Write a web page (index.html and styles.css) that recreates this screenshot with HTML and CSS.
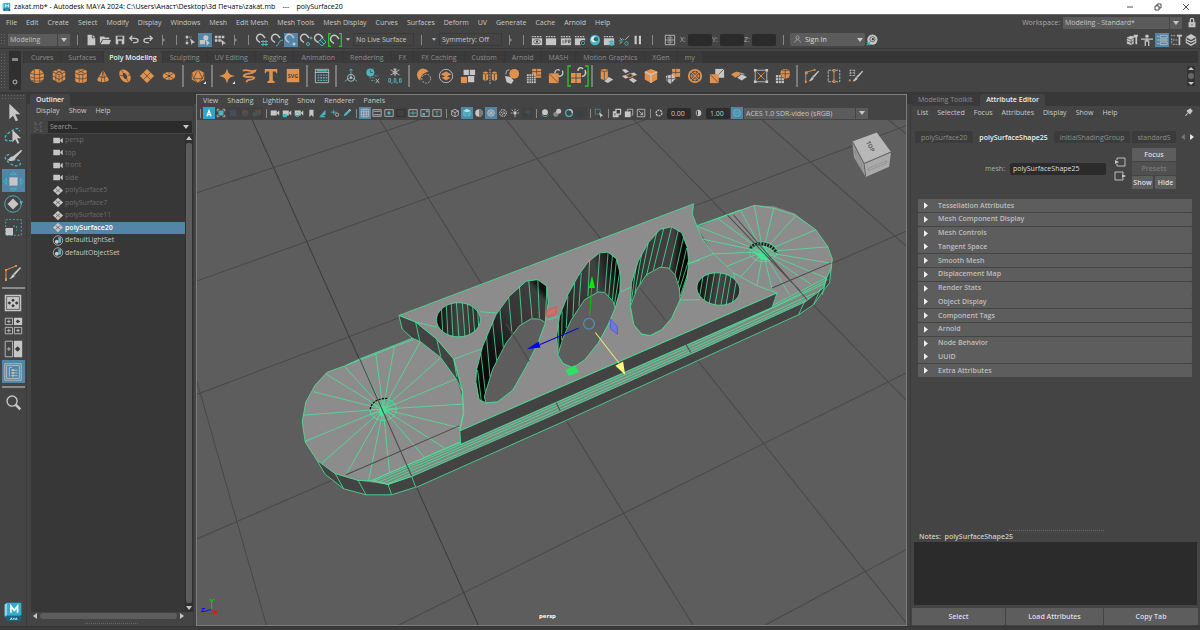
FILE: index.html
```html
<!DOCTYPE html>
<html lang="en">
<head>
<meta charset="utf-8">
<title>zakat.mb* - Autodesk MAYA 2024</title>
<link rel="stylesheet" href="styles.css">
</head>
<body>
<svg class="defs" aria-hidden="true">
  <defs>
    <symbol id="magnet" viewBox="0 0 14 14"><path class="sw2" d="M5 9.500 2.500 7.500A3.600 3.600 0 1 1 8 2.500l2 2.500"/></symbol>
    <symbol id="clap" viewBox="0 0 14 14"><path class="w" d="M1 5h12v8H1z"/><path class="sw2" d="M1 3h12" stroke-dasharray="2 1"/></symbol>
    <symbol id="camera" viewBox="0 0 14 14"><path class="w" d="M1 3.500h8.500v7H1zM10 6l3-2.500v7L10 8z"/></symbol>
    <symbol id="mesh" viewBox="0 0 14 14"><path class="w" d="M7 1l6.500 6L7 13 .5 7z"/><path class="sd" d="M4 4.500l6 5M10 4.500l-6 5"/></symbol>
    <symbol id="set" viewBox="0 0 14 14"><circle class="sw" cx="7" cy="7" r="6"/><path class="t" d="M7 3h4v7H8z"/><circle class="w" cx="5.500" cy="8.500" r="2.500"/></symbol>
    <symbol id="cursor" viewBox="0 0 24 24"><path class="w" d="M8 3v17l4-4 3 6 2.500-1-3-6.500H20z"/></symbol>
    <symbol id="down" viewBox="0 0 6 4"><path class="w" d="M0 0h6L3 4z"/></symbol>
    <symbol id="right" viewBox="0 0 5 8"><path fill="#eee" d="M0 0l5 4-5 4z"/></symbol>
    <symbol id="app" viewBox="0 0 24 24"><path fill="#1f7fa0" d="M2 3l3-2h16v18H2z"/><path fill="#38abd0" d="M5 1h17v15H5z"/><path fill="#8ed4e8" d="M2 3l3-2v15l-3 1z"/><path fill="#1b607c" d="M4 17h18v6H4z"/><path fill="none" stroke="#fff" stroke-width="2" d="M9.500 13V5l4 5 4-5v8"/><path fill="none" stroke="#cfe6ee" stroke-width="1.200" d="M9 21.500l1-2.500 1 2.500M12 19l1 1.200 1-1.200M13 20v1.500M15 21.500l1-2.500 1 2.500"/></symbol>
    <symbol id="brush" viewBox="0 0 18 18"><path class="w" d="M16 3l1 1-6 7-2-1zM9 10l2 2c-2 2-4 3-6 3 2-1 2-3 4-5z"/></symbol>
  </defs>
</svg>

<header class="titlebar">
  <svg class="logo"><use href="#app"/></svg>
  <h1>zakat.mb* - Autodesk MAYA 2024: C:\Users\Анаст\Desktop\3d Печать\zakat.mb&nbsp;&nbsp;&nbsp; ---&nbsp;&nbsp;&nbsp; polySurface20</h1>
  <div class="winbtns">
    <button aria-label="Minimize"><svg viewBox="0 0 8 8"><path d="M1 4h6"/></svg></button>
    <button aria-label="Restore"><svg viewBox="0 0 8 8"><path d="M1 3h4v4H1zM3 3V1h4v4H5"/></svg></button>
    <button aria-label="Close"><svg viewBox="0 0 8 8"><path d="M1 1l6 6M7 1L1 7"/></svg></button>
  </div>
</header>

<nav class="menubar">
  <div class="menus"><button>File</button><button>Edit</button><button>Create</button><button>Select</button><button>Modify</button><button>Display</button><button>Windows</button><button>Mesh</button><button>Edit Mesh</button><button>Mesh Tools</button><button>Mesh Display</button><button>Curves</button><button>Surfaces</button><button>Deform</button><button>UV</button><button>Generate</button><button>Cache</button><button>Arnold</button><button>Help</button></div>
  <div class="workspace">
    <label for="ws">Workspace:</label>
    <span class="combo wide"><select id="ws"><option>Modeling - Standard*</option></select><svg><use href="#down"/></svg></span>
    <button class="ib" aria-label="Lock workspace"><svg viewBox="0 0 14 14"><path class="w" d="M3 6h8v6H3z"/><path class="sw2" d="M5 6V3.500a2 2 0 0 1 4 0V6"/><path class="sd" d="M7 8v2"/></svg></button>
  </div>
</nav>

<div class="status">
  <i class="grip"></i>
  <span class="combo mode"><select aria-label="Menu set"><option>Modeling</option></select><svg><use href="#down"/></svg></span>
  <i class="sep"></i>
  <div class="grp g5">
    <button class="ib" aria-label="New scene"><svg viewBox="0 0 14 14"><path class="w" d="M3 1h5v4h4v8H3zM9 1l3 3H9z"/></svg></button>
    <button class="ib" aria-label="Open scene"><svg viewBox="0 0 14 14"><path class="w" d="M1 3h5l1 1h5v2H4l-3 5zM4.500 7H14l-2 5H2z"/></svg></button>
    <button class="ib" aria-label="Save scene"><svg viewBox="0 0 14 14"><path class="w" fill-rule="evenodd" d="M2 2h10v10H2zM4 3v3h6V3zM5 8v4h4V8z"/></svg></button>
    <button class="ib" aria-label="Undo"><svg viewBox="0 0 14 14"><path class="sw2" d="M5 2L2 5l3 3M2 5h6c5 0 5 5 0 5H6"/></svg></button>
    <button class="ib" aria-label="Redo"><svg viewBox="0 0 14 14"><path class="sw2" d="M9 2l3 3-3 3M12 5H6c-5 0-5 5 0 5h2"/></svg></button>
  </div>
  <i class="sep fold"></i><i class="sep"></i>
  <div class="grp g3">
    <button class="ib" aria-label="Select by hierarchy"><svg viewBox="0 0 14 14"><path class="w" d="M2 2h3v3H2zM2 9h3v3H2zM7 5l6 5-3 .5L9 13z"/><path class="sw" d="M6 3.500h3M3.500 5v4" stroke-dasharray="1 1"/></svg></button>
    <button class="ib on" aria-label="Select by object"><svg viewBox="0 0 14 14"><circle class="w" cx="8" cy="4.500" r="3"/><path class="w" d="M1 7h6v5H1zM8 6l5 5-2 .5L9 14z"/></svg></button>
    <button class="ib" aria-label="Select by component"><svg viewBox="0 0 14 14"><path class="w" d="M1 2h3v3H1zM5 2h3v3H5zM9 2h3v3H9zM1 6h3v3H1zM5 6h3v3H5zM8 6l6 5-3 .5L10 14z"/></svg></button>
  </div>
  <i class="sep fold"></i><i class="sep"></i>
  <div class="grp g6">
    <button class="ib" aria-label="Snap to grids"><svg viewBox="0 0 14 14"><use href="#magnet"/><path class="st" d="M8 7v6M11 7v6M6 8.500h7M6 11.500h7"/></svg></button>
    <button class="ib" aria-label="Snap to curves"><svg viewBox="0 0 14 14"><use href="#magnet"/><path class="st" d="M6 13c4-1 1-5 7-6"/></svg></button>
    <button class="ib on" aria-label="Snap to points"><svg viewBox="0 0 14 14"><use href="#magnet"/><circle class="w" cx="10" cy="11" r="1.500"/></svg></button>
    <button class="ib" aria-label="Snap to projected center"><svg viewBox="0 0 14 14"><use href="#magnet"/><circle class="st" cx="12" cy="5" r="1"/><circle class="st" cx="9" cy="11" r="1.500"/></svg></button>
    <button class="ib" aria-label="Snap to view planes"><svg viewBox="0 0 14 14"><use href="#magnet"/><path class="st" d="M9 5l4 4-4 4-4-4zM7 7l4 4"/></svg></button>
    <button class="ib" aria-label="Make live"><svg viewBox="0 0 14 14"><use href="#magnet" x="1" y="1"/><path class="sg" d="M3 .7H.7v12.600H3M11 .7h2.300v12.600H11"/></svg></button>
  </div>
  <button class="caret" aria-label="Live surface menu"><svg><use href="#down"/></svg></button>
  <button class="field live">No Live Surface</button>
  <i class="sep"></i>
  <button class="caret" aria-label="Symmetry menu"><svg><use href="#down"/></svg></button>
  <button class="field sym">Symmetry: Off</button>
  <i class="sep fold"></i><i class="sep"></i>
  <div class="grp g8">
    <button class="ib" aria-label="Open render view"><svg viewBox="0 0 14 14"><use href="#clap"/><ellipse class="sd" cx="7" cy="9" rx="4" ry="2.500"/><circle class="k" cx="7" cy="9" r="1.300"/></svg></button>
    <button class="ib" aria-label="Render frame"><svg><use href="#clap"/></svg></button>
    <button class="ib" aria-label="IPR render"><svg viewBox="0 0 14 14"><use href="#clap"/><path class="sd" d="M3.500 7v4M6 11V7h2v2H6M10 11V7h2v2h-2l2 2"/></svg></button>
    <button class="ib" aria-label="Render settings"><svg viewBox="0 0 14 14"><use href="#clap"/><circle class="k" cx="10.500" cy="10.500" r="3.500"/><circle class="st" cx="10.500" cy="10.500" r="2"/></svg></button>
    <button class="ib" aria-label="Hypershade"><svg viewBox="0 0 14 14"><circle class="t" cx="7" cy="7" r="6"/><circle fill="#d9f1f4" cx="6" cy="6" r="3.500"/><circle fill="#27686f" cx="8" cy="6" r="2.500"/></svg></button>
    <button class="ib" aria-label="Render setup"><svg viewBox="0 0 14 14"><use href="#clap"/><path class="t" d="M6 9l4-2 4 2-4 2zM6 12l4-2 4 2-4 2z"/></svg></button>
    <button class="ib" aria-label="Light editor"><svg viewBox="0 0 14 14"><path class="sw" d="M2 5l3 2M5 9L2 11M8 7l5-5"/><circle class="st" cx="10" cy="11" r="2"/><path class="st" d="M1 8h4M5 5l2 2"/></svg></button>
    <button class="ib" aria-label="Pause viewport"><svg viewBox="0 0 14 14"><path class="w" d="M3 2h2.500v10H3zM8 2h2.500v10H8z"/></svg></button>
  </div>
  <i class="sep"></i>
  <button class="ib wideib" aria-label="Input mode"><svg viewBox="0 0 14 14"><path class="sw" d="M1.500 1.500h11v11h-11zM7 1.500v11M1.500 7h11M4 4.500h2M8 4.500h2M4 9.500h2M8 9.500h2"/></svg></button>
  <label class="axis">X:<input type="text"></label><label class="axis">Y:<input type="text"></label><label class="axis">Z:<input type="text"></label>
  <i class="sep"></i>
  <button class="signin"><svg viewBox="0 0 14 14"><circle class="sw" cx="7" cy="4" r="2.500"/><path class="sw" d="M2.500 12c.5-6 8.500-6 9 0"/></svg><span>Sign In</span><svg class="tri"><use href="#down"/></svg></button>
  <button class="ib" aria-label="Account"><svg viewBox="0 0 14 14"><circle class="w" cx="7.500" cy="6.500" r="6"/><circle class="sd" cx="7.500" cy="6" r="3"/><circle class="k" cx="8" cy="6" r="1.300"/><path class="st2" d="M1 9l4 4M5 9l-4 4"/></svg></button>
  <div class="grp g5 end">
    <button class="ib" aria-label="Modeling toolkit"><svg viewBox="0 0 14 14"><path class="w" d="M1 4l5-2 3 1v8l-3 2-5-2zM9 1h5v2h-1v9h-2V4H9z"/><path class="sd" d="M1 5l5 2 3-2M6 7v6M1 8l5 2 3-2"/></svg></button>
    <button class="ib" aria-label="Character controls"><svg viewBox="0 0 14 14"><circle class="w" cx="7" cy="2.500" r="2"/><path class="sw2" d="M0 6h14M7 5v4M5 14V8h4v6"/></svg></button>
    <button class="ib on" aria-label="Attribute editor"><svg viewBox="0 0 14 14"><path class="sw" d="M5 1.500h8v3H5zM5 6h8v2H5zM5 9.500h8v3H5zM1 3h3M1 7h3M1 11h3"/></svg></button>
    <button class="ib" aria-label="Tool settings"><svg viewBox="0 0 14 14"><path class="w" d="M8 1h6v2h-2v10h-2V3H8z"/><path class="sw" d="M1 2h6M2 5v7M3.500 7h5M3.500 12h5" stroke-dasharray="2 1"/></svg></button>
    <button class="ib" aria-label="Channel box"><svg viewBox="0 0 14 14"><path class="w" d="M7 0l6 3.500-6 3.500-6-3.500z"/><path class="sw2" d="M1 6.500l6 3 6-3M1 9.500l6 3.500 6-3.500"/><path class="sw" d="M1.500 4v6M12.500 4v6"/></svg></button>
  </div>
</div>

<section class="shelf">
  <i class="grip"></i>
  <div class="shelfctl"><button aria-label="Shelf tabs"><svg viewBox="0 0 8 8"><path fill="#888" d="M1 3h6v3H1z"/></svg></button><button aria-label="Shelf options"><svg viewBox="0 0 8 8"><circle class="sw" cx="4" cy="4" r="2"/></svg></button></div>
  <div class="shelfbody">
    <div class="shelftabs"><button>Curves</button><button>Surfaces</button><button class="sel">Poly Modeling</button><button>Sculpting</button><button>UV Editing</button><button>Rigging</button><button>Animation</button><button>Rendering</button><button>FX</button><button>FX Caching</button><button>Custom</button><button>Arnold</button><button>MASH</button><button>Motion Graphics</button><button>XGen</button><button>my</button></div>
    <div class="shelfrow">
      <button aria-label="Sphere"><svg viewBox="0 0 18 18"><circle class="o" cx="9" cy="9" r="8"/><path class="sd" d="M2 6c4 2 10 2 14 0M1.500 10c4 2 11 2 15 0M3 14c3 1 9 1 12 0M6 2v14M12 2v14"/></svg></button>
      <button aria-label="Cube"><svg viewBox="0 0 18 18"><path class="o" d="M9 1l7 3v9l-7 4-7-4V4z"/><path class="sd" d="M2 4.500l7 3 7-3M9 7.500V17M2 9l7 4 7-4M5.500 6v9M12.500 6v9M5.500 2.500l7 3.500M12.500 2.500L5.500 6"/></svg></button>
      <button aria-label="Cylinder"><svg viewBox="0 0 18 18"><path class="o" d="M2.500 4c0-3.500 13-3.500 13 0v10c0 3.500-13 3.500-13 0z"/><path class="sd" d="M2.500 5c0 3 13 3 13 0M2.500 10c0 3 13 3 13 0M7 7v9M11 7v9M5 2l8 4M13 2L5 6"/></svg></button>
      <button aria-label="Cone"><svg viewBox="0 0 18 18"><path class="o" d="M9 2l6.500 11c0 4-13 4-13 0z"/><path class="sd" d="M4.500 9c2 2 7 2 9 0M9 2L7 16M9 2l2.500 14"/></svg></button>
      <button aria-label="Torus"><svg viewBox="0 0 18 18"><path class="o" fill-rule="evenodd" d="M5 2c8-2 14 10 8 14C5 18-1 5 5 2zM7 6c-2 2 2 8 4 6s-2-8-4-6z"/><path class="sd" d="M5 2l2 4M15 8h-3M13 16l-2-4M3 8l4 1"/></svg></button>
      <button aria-label="Plane"><svg viewBox="0 0 18 18"><path class="o" d="M9 1l8 8-8 8-8-8z"/><path class="sd" d="M5 5l8 8M13 5l-8 8"/></svg></button>
      <button aria-label="Disc"><svg viewBox="0 0 18 18"><ellipse class="o" cx="9" cy="9" rx="7" ry="4.500"/><path class="sd" d="M4 6l10 6M14 6L4 12M9 4v3M9 11v3"/><circle class="k" cx="9" cy="9" r="1"/></svg></button>
      <i class="bar"></i>
      <button aria-label="Platonic solid"><svg viewBox="0 0 18 18"><path class="o" d="M9 1l7 4v8l-7 4-7-4V5z"/><path class="sd" d="M9 1L4 12h10zM2 5l2 7M16 5l-2 7M4 12l5 5 5-5M9 1l7 4M9 1L2 5"/><path fill="#eee" d="M18 15v3h-3z"/></svg></button>
      <i class="bar"></i>
      <button aria-label="Super shapes"><svg viewBox="0 0 18 18"><path class="o" d="M9 0c1 6 3 8 9 9-6 1-8 3-9 9-1-6-3-8-9-9 6-1 8-3 9-9z"/><path fill="#eee" d="M18 15v3h-3z"/></svg></button>
      <button aria-label="Sweep mesh"><svg viewBox="0 0 18 18"><path class="so2" d="M2 3c7-2 7 2 14 0-2 5-12 2-13 6 4 3 11-1 12 2-2 4-8 0-9 5"/></svg></button>
      <button aria-label="Type"><svg viewBox="0 0 18 18"><path class="o" d="M2 1h14v5h-1l-1-2h-3v10l2 1v2H5v-2l2-1V4H4L3 6H2z"/></svg></button>
      <button aria-label="SVG"><svg viewBox="0 0 18 18"><path class="o" d="M2 1h14v15H2z"/><text class="svgtext" x="9" y="11">SVG</text></svg></button>
      <i class="bar"></i>
      <button aria-label="Content browser"><svg viewBox="0 0 18 18"><path class="sw" d="M1.500 1.500h15v15h-15zM1 5h16"/><path class="t" d="M3 2h12v2H3z"/><path class="st2" stroke-dasharray="2 1" d="M4 8h11M4 11h11M4 14h11"/></svg></button>
      <i class="bar"></i>
      <button aria-label="Pivot"><svg viewBox="0 0 18 18"><path class="st" d="M9 1v9l-7 5M9 10l7 5M7 3l2-2 2 2"/><circle class="sw" cx="9" cy="11" r="4"/><circle class="w" cx="9" cy="11" r="1.300"/></svg></button>
      <button aria-label="Delete history"><svg viewBox="0 0 18 18"><circle class="t" cx="6" cy="5" r="4.500"/><path class="sd" d="M6 2v3h3"/><path class="st" stroke-dasharray="2 1" d="M5 11h5M7 14h4M11 9h4"/><path class="sw" d="M12 12l4 5M16 12l-4 5"/></svg></button>
      <button aria-label="Freeze transformations"><svg viewBox="0 0 18 18"><path class="sw" d="M9 0v9M4 2l10 6M14 2L4 8M7 1l2 1 2-1"/><circle class="sw" cx="9" cy="5" r="2"/><path class="st" d="M2 12h2v4H2zM8 12h2v4H8zM14 12h2v4h-2zM6 16l-1 2M12 16l-1 2"/></svg></button>
      <i class="bar"></i>
      <button aria-label="Boolean"><svg viewBox="0 0 18 18"><path class="o" d="M14 4A7 7 0 1 0 5 14c0-5 4-9 9-10z"/><circle class="sw" cx="11.500" cy="12" r="5" stroke-dasharray="2 1.500"/></svg></button>
      <button aria-label="Combine"><svg viewBox="0 0 18 18"><circle class="sw" cx="9" cy="9" r="7.500"/><path class="o" d="M3 7l6-3 6 3-6 3zM4 11l5-2 5 2-5 3z"/></svg></button>
      <button aria-label="Separate"><svg viewBox="0 0 18 18"><path class="w" d="M4 2h6v6H4zM11 2h6v6h-6zM9 9h7v7H9z"/><path class="o" d="M1 10h7v7H1z"/></svg></button>
      <button aria-label="Mirror"><svg viewBox="0 0 18 18"><path class="o" d="M1 5l3-1 3 1v8l-3 2-3-2zM11 5l3-1 3 1v8l-3 2-3-2z"/><path class="sd" d="M1 6l3 1 3-1M4 7v8M11 6l3 1 3-1M14 7v8"/><path class="sw" d="M9 1v17" stroke-dasharray="2 1"/></svg></button>
      <button aria-label="Smooth"><svg viewBox="0 0 18 18"><path class="w" d="M1 9l6 1 4 4-3 4-5-2z"/><circle class="o" cx="11.500" cy="6.500" r="5.500"/><path class="sw" d="M2 7l1-4 3-1"/></svg></button>
      <button aria-label="Subdivide"><svg viewBox="0 0 18 18"><path class="o" d="M7 1h10v10H7z"/><path class="w" d="M1 7h10v10H1z"/><path class="sd" d="M12 1v6M7 4h10M11 8h6M3.500 7v10M6 7v10M8.500 7v10M1 9.500h10M1 12h10M1 14.500h10"/></svg></button>
      <button aria-label="Triangulate"><svg viewBox="0 0 18 18"><path class="o" d="M1 6h11v11H1z"/><path class="sd" d="M1 6l11 11"/><path class="sw2" d="M8 6c-1-4 4-5 5-3M16 3c2 4-1 7-4 6"/></svg></button>
      <button aria-label="Quadrangulate"><svg class="big" viewBox="0 0 22 22"><path class="sg" d="M4 1H1v20h3M18 1h3v20h-3"/><path class="o" d="M4 8h10v10H4z"/><path class="sd" d="M9 8v10M4 13h10"/><path class="sw2" d="M11 6c0-4 4-4 5-2M18 5c2 4-1 7-3 6"/></svg></button>
      <i class="bar"></i>
      <button aria-label="Extrude"><svg viewBox="0 0 18 18"><path class="o" d="M2 2l4-1 4 1v9l-4 3-4-2z"/><path class="sd" d="M2 3l4 1 4-1M6 4v10"/><path class="w" d="M11 10l5 3-6 4-4-2z"/></svg></button>
      <button aria-label="Bridge"><svg viewBox="0 0 18 18"><path class="w" d="M1 2l4-1 4 3-4 2zM9 13l4-2 5 3-4 3z"/><path class="w" d="M1 9l4-1 3 3-3 1zM11 6l4-1 3 3-4 1z"/><path class="so" d="M6 8l5-2 3 3-5 2z"/></svg></button>
      <button aria-label="Bevel"><svg viewBox="0 0 18 18"><path class="o" d="M9 1l7 3v9l-7 4-7-4V4z"/><path class="sw2" d="M2 4.500l7 3 7-3M9 7.500V17"/></svg></button>
      <button aria-label="Merge"><svg viewBox="0 0 18 18"><path class="o" d="M8 1h9v9H8z"/><path class="w" d="M1 9l8-2 3 5-6 6-4-3z"/><path class="sd" d="M8 5h9M12 1v6M3 9v8M1 12h10M7 8v9"/></svg></button>
      <button aria-label="Circularize"><svg viewBox="0 0 18 18"><circle class="so2" cx="9" cy="9" r="7"/><circle class="so" cx="9" cy="9" r="4"/><path class="so" d="M9 2v14M2 9h14M4 4l10 10M14 4L4 14"/></svg></button>
      <button aria-label="Split faces"><svg viewBox="0 0 18 18"><path class="w" d="M7 1h10v10H7z"/><path class="o" d="M1 7h10v10H1z"/><path class="sd" d="M1 7l10 10M17 1l-6 6"/></svg></button>
      <button aria-label="Extract"><svg viewBox="0 0 18 18"><path class="o" d="M0 7l6-3 5 3-6 4z"/><path class="w" d="M7 11l5-4 6 3-6 4z"/><path class="sw" d="M8 5l7 2"/></svg></button>
      <button aria-label="Connect"><svg viewBox="0 0 18 18"><path class="sw" d="M2.500 2.500h13v13h-13z"/><path class="so" d="M5 5l8 8M13 5l-8 8"/><path class="w" d="M1 1h3v3H1zM14 1h3v3h-3zM1 14h3v3H1zM14 14h3v3h-3z"/><path class="o" d="M8 8h2v2H8z"/></svg></button>
      <button aria-label="Project curve"><svg viewBox="0 0 18 18"><path class="w" d="M1 8h9v9H1z"/><circle class="o" cx="11.500" cy="6.500" r="5.500"/><path class="sd" d="M4 8v9M7 8v9M1 11h9M1 14h9M6 6.500h11M11.500 1v11M8 3h7"/></svg></button>
      <i class="bar"></i>
      <button aria-label="Multi-cut"><svg viewBox="0 0 18 18"><path class="so" d="M2 16V5l10-3"/><path class="o" d="M1 4h3v3H1zM11 1h2v2h-2zM1 14h2v3H1z"/><use href="#brush"/></svg></button>
      <button aria-label="Target weld"><svg viewBox="0 0 18 18"><path class="sw" d="M2.500 2.500h13v13h-13z" stroke-dasharray="3 1"/><path class="so" d="M9 4v10"/><circle class="so" cx="9" cy="3" r="1.500"/><circle class="so" cx="9" cy="15" r="1.500"/></svg></button>
      <button aria-label="Quad draw"><svg viewBox="0 0 18 18"><path class="sw" d="M2 2.500h6M2 5.500h6M2 8.500h6M2.500 2v7M7.500 2v7" stroke-dasharray="2 1"/><path class="o" d="M1 13h2v2H1zM6 13h2v2H6z"/><use href="#brush"/></svg></button>
      <div class="spin"><svg viewBox="0 0 8 20"><path class="w" d="M4 1l3 3H1zM4 19l3-3H1z"/><circle fill="#666" cx="4" cy="10" r="3"/></svg></div>
    </div>
  </div>
</section>

<main>
  <aside class="toolbox">
    <i class="hgrip"></i>
    <button aria-label="Select tool"><svg><use href="#cursor"/></svg></button>
    <button aria-label="Lasso tool"><svg viewBox="0 0 24 24"><path class="st2" stroke-dasharray="3 2" d="M11 18c-9 2-10-3-4-8s12-7 12-2"/><use href="#cursor" x="5" y="4" width="19" height="19"/></svg></button>
    <button aria-label="Paint selection"><svg viewBox="0 0 24 24"><path class="st2" stroke-dasharray="3 2" d="M8 8c-7 2-5 6 1 10s12 3 11-1-7-4-9-2"/><path class="w" d="M21 3l1 1-8 9-3-2zM11 10l3 3c-3 4-6 2-9 1 3 0 3-3 6-4z"/></svg></button>
    <button class="on" aria-label="Move tool"><svg viewBox="0 0 24 24"><path class="w" d="M8 8h9v9H8z"/><path class="st" d="M9 5l3.500-3L16 5zM9 20l3.500 3 3.500-3zM5 9l-3 3.500L5 16zM20 9l3 3.500-3 3.500z"/></svg></button>
    <button aria-label="Rotate tool"><svg viewBox="0 0 24 24"><circle class="st" cx="12" cy="12" r="9"/><path class="t" d="M19 9h4l-2 4z"/><path class="w" d="M12 6l6 6-6 6-6-6z"/></svg></button>
    <button aria-label="Scale tool"><svg viewBox="0 0 24 24"><path class="st" stroke-dasharray="2 2" d="M4 4h17v17H4zM12 11h4v5"/><path class="w" d="M4 13h8v8H4z"/></svg></button>
    <button class="cut" aria-label="Last tool"><svg viewBox="0 0 18 18"><path class="so" d="M2 16V6l10-4"/><path class="o" d="M1 5h2v2H1zM11 1h2v2h-2zM1 14h2v3H1z"/><use href="#brush"/></svg></button>
    <hr>
    <button aria-label="Single pane"><svg viewBox="0 0 24 24"><path class="w" d="M3 3h18v18H3z"/><path class="sd" d="M5 5h14v14H5z"/><path class="k" d="M12 7l2 2-2 2-2-2zM8 10l2 2-2 2-2-2zM16 10l2 2-2 2-2-2zM12 13l2 2-2 2-2-2z"/></svg></button>
    <button aria-label="Four panes"><svg viewBox="0 0 24 24"><path class="w" d="M13 3h9v8h-9z"/><path class="sw" d="M3.500 3.500h8v7h-8zM3.500 13.500h8v7h-8zM13.500 13.500h8v7h-8zM7.500 5v4M5.500 7h4M7.500 15v4M5.500 17h4M17.500 15v4M15.500 17h4"/><path class="k" d="M15 7l2-2 3 2-3 2z"/></svg></button>
    <button aria-label="Two panes"><svg viewBox="0 0 24 24"><path class="w" d="M13 3h9v18h-9z"/><path class="sw" d="M3.500 3.500h8v17h-8zM7.500 10v4M5.500 12h4"/><path class="k" d="M14 12l3-3 3 3-3 3z"/></svg></button>
    <button class="on" aria-label="Outliner layout"><svg viewBox="0 0 24 24"><path class="sw" d="M3 3h18v18H3zM5 5h14v14H5zM8 7v10M8 7h3M10 10h7M10 13h7M10 16h7"/><path class="w" d="M11 9h2v2h-2zM11 12h2v2h-2zM11 15h2v2h-2z"/></svg></button>
    <hr>
    <button aria-label="Search"><svg viewBox="0 0 24 24"><circle class="sw2" cx="11" cy="11" r="5.500"/><path class="w" d="M14 16l2-2 5 5-2 2z"/></svg></button>
    <svg class="maya"><use href="#app"/></svg>
  </aside>

  <section class="outliner">
    <div class="tabs"><button class="sel">Outliner</button></div>
    <div class="menus"><button>Display</button><button>Show</button><button>Help</button></div>
    <div class="search"><svg viewBox="0 0 14 14"><path fill="none" stroke="#777" stroke-dasharray="3 2" d="M3 3h8v8H3zM1 1h3M10 1h3M1 13h3M10 13h3"/></svg><div class="sbox"><input type="text" placeholder="Search..." aria-label="Search"><svg class="tri"><use href="#down"/></svg></div></div>
    <div class="tree">
      <ul>
        <li class="dim"><svg><use href="#camera"/></svg>persp</li>
        <li class="dim"><svg><use href="#camera"/></svg>top</li>
        <li class="dim"><svg><use href="#camera"/></svg>front</li>
        <li class="dim"><svg><use href="#camera"/></svg>side</li>
        <li class="dim"><svg><use href="#mesh"/></svg>polySurface5</li>
        <li class="dim"><svg><use href="#mesh"/></svg>polySurface7</li>
        <li class="dim"><svg><use href="#mesh"/></svg>polySurface11</li>
        <li class="picked"><svg><use href="#mesh"/></svg>polySurface20</li>
        <li><svg><use href="#set"/></svg>defaultLightSet</li>
        <li><svg><use href="#set"/></svg>defaultObjectSet</li>
      </ul>
      <div class="vscroll"><svg viewBox="0 0 6 4"><path class="w" d="M0 4h6L3 0z"/></svg><i></i><svg viewBox="0 0 6 4"><path class="w" d="M0 0h6L3 4z"/></svg></div>
    </div>
    <div class="hscroll"><svg viewBox="0 0 4 6"><path class="w" d="M4 0v6L0 3z"/></svg><i></i><svg viewBox="0 0 4 6"><path class="w" d="M0 0v6l4-3z"/></svg></div>
    <i class="dots"></i>
  </section>

  <section class="viewport">
    <div class="menus"><button>View</button><button>Shading</button><button>Lighting</button><button>Show</button><button>Renderer</button><button>Panels</button></div>
    <div class="vbar">
      <i class="vs first"></i>
      <button class="bright" aria-label="Arnold"><svg viewBox="0 0 12 12"><path fill="none" stroke="#fff" stroke-width="1.500" d="M3.500 10L6 3l2.500 7M4.500 8h3"/></svg></button>
      <button aria-label="Region"><svg viewBox="0 0 12 12"><path class="t" d="M3 3h6v6H3z"/><path class="sw" d="M1.500 4V1.500H4M8 1.500h2.500V4M10.500 8v2.500H8M4 10.500H1.500V8"/></svg></button>
      <button class="off" aria-label="AOV"><svg viewBox="0 0 12 12"><path fill="#454c5c" d="M2 2h8v8H2z"/></svg></button>
      <button class="off" aria-label="Color"><svg viewBox="0 0 12 12"><circle fill="#5c4c48" cx="6" cy="6" r="4"/><path fill="#4a4a5c" d="M6 6l4 1a4 4 0 0 1-7 2z"/></svg></button>
      <button class="off" aria-label="Snapshots"><svg viewBox="0 0 12 12"><path fill="#5f4c42" d="M4 2h7v6H4z"/><path fill="#445454" d="M1 5h7v5H1z"/></svg></button>
      <i class="vs"></i>
      <button aria-label="Select camera"><svg><use href="#camera"/></svg></button>
      <button aria-label="Lock camera"><svg viewBox="0 0 12 12"><use href="#camera"/><path class="t" d="M1 7h5v4H1z"/></svg></button>
      <button aria-label="Camera attributes"><svg viewBox="0 0 12 12"><use href="#camera"/><circle class="st" cx="4" cy="8" r="2.500"/></svg></button>
      <button aria-label="Bookmarks"><svg viewBox="0 0 12 12"><path class="w" d="M4 2h5v9L6.500 8.500 4 11z"/></svg></button>
      <button aria-label="Image plane"><svg viewBox="0 0 12 12"><path class="t" d="M2 10l7-8v6zM1 11h8L6 8z"/></svg></button>
      <button aria-label="2D pan zoom"><svg viewBox="0 0 12 12"><path class="st" d="M1 5h7M4.500 2v6"/><circle class="sw" cx="8.500" cy="8" r="2"/></svg></button>
      <button aria-label="Grease pencil"><svg viewBox="0 0 12 12"><path class="t" d="M2 10l1-3 5-5 2 2-5 5z"/><path class="w" d="M8 2l1-1 2 2-1 1z"/></svg></button>
      <i class="vs"></i>
      <button class="on" aria-label="Grid"><svg viewBox="0 0 12 12"><path class="sw" d="M1.500 1.500h9v9h-9zM4.500 1v10M7.500 1v10M1 4.500h10M1 7.500h10"/></svg></button>
      <button aria-label="Film gate"><svg viewBox="0 0 12 12"><path class="sw" d="M1 2h10v8H1zM2 4h8M2 8h8"/></svg></button>
      <button aria-label="Resolution gate"><svg viewBox="0 0 12 12"><path class="sw" d="M1 2h10v8H1z"/><circle class="t" cx="6" cy="6" r="2"/></svg></button>
      <button class="off" aria-label="Gate mask"><svg viewBox="0 0 12 12"><path fill="none" stroke="#2c2c2c" d="M1 2h10v8H1z"/></svg></button>
      <button aria-label="Field chart"><svg viewBox="0 0 12 12"><path class="sw" d="M1 2h10v8H1z"/><path class="st" d="M6 3v6M2 6h8"/></svg></button>
      <button aria-label="Safe action"><svg viewBox="0 0 12 12"><path class="sw" d="M1 2h10v8H1z"/><path class="t" d="M3 6h3v3H3zM7 3h3v2H7z"/></svg></button>
      <button aria-label="Safe title"><svg viewBox="0 0 12 12"><path class="sw" d="M1 2h10v8H1z"/><path class="st" d="M4 4.500h4M6 4.500V9"/></svg></button>
      <i class="vs"></i>
      <button aria-label="Wireframe"><svg viewBox="0 0 12 12"><path class="sw" d="M6 1.500l4 2v5l-4 2-4-2v-5zM2 3.500l4 2 4-2M6 5.500v5"/></svg></button>
      <button class="on" aria-label="Shaded"><svg viewBox="0 0 12 12"><path fill="#9fe4ea" d="M6 1l5 2.500-5 2-5-2z"/><path class="t" d="M1 4l4.500 2v5L1 9zM11 4L6.500 6v5L11 9z"/></svg></button>
      <button aria-label="Default material"><svg viewBox="0 0 12 12"><circle class="w" cx="6" cy="6" r="4.500"/><path fill="#777" d="M6 1.500a4.500 4.500 0 0 1 0 9z"/></svg></button>
      <button class="on" aria-label="Wireframe on shaded"><svg viewBox="0 0 12 12"><circle class="sw" cx="6" cy="6" r="4"/><path class="sw" d="M2 6h8M6 2v8M3 3l6 6M9 3L3 9"/></svg></button>
      <button aria-label="Textured"><svg viewBox="0 0 12 12"><circle class="sw2" cx="6" cy="6" r="4" stroke-dasharray="1 1"/><circle class="sw2" cx="6" cy="6" r="1.500" stroke-dasharray="1 1"/></svg></button>
      <button aria-label="Lights"><svg viewBox="0 0 12 12"><circle class="w" cx="6" cy="6" r="2"/><path class="sw" d="M2 2l2 2M10 2L8 4M6 8v3M6 1v2M1 6h2M9 6h2"/></svg></button>
      <button class="off" aria-label="Shadows"><svg viewBox="0 0 12 12"><circle fill="#3c5155" cx="7" cy="5" r="3"/><ellipse fill="#363e40" cx="4" cy="8" rx="3" ry="1.500"/></svg></button>
      <i class="vs"></i>
      <button aria-label="Ambient occlusion"><svg viewBox="0 0 12 12"><circle class="w" cx="6" cy="5" r="3.500"/><path class="st" d="M2 8c2 3 6 3 8 0"/></svg></button>
      <button aria-label="Motion blur"><svg viewBox="0 0 12 12"><circle fill="#888" cx="4.500" cy="7.500" r="3"/><circle class="w" cx="8" cy="4" r="3"/></svg></button>
      <button aria-label="Anti-aliasing"><svg viewBox="0 0 12 12"><circle class="st2" cx="6" cy="6" r="4"/><path class="sw2" d="M6 2a4 4 0 0 1 4 4"/></svg></button>
      <button class="off" aria-label="Depth of field"><svg viewBox="0 0 12 12"><path fill="#2f4548" d="M2 4h4v6H2zM6 7h4v3H6z"/></svg></button>
      <i class="vs"></i>
      <button aria-label="Isolate select"><svg viewBox="0 0 12 12"><path class="st" stroke-dasharray="1.500 1" d="M1.500 1.500h6v6h-6z"/><path class="w" d="M6 5l5 4-2 .5L8 12z"/></svg></button>
      <i class="vs"></i>
      <button aria-label="X-ray"><svg viewBox="0 0 12 12"><path class="w" d="M4 1h7v7H8v3H1V4h3z"/><path class="k" d="M5.500 2.500h4v4h-4zM3 6h1v3H3z"/></svg></button>
      <button aria-label="X-ray joints"><svg viewBox="0 0 12 12"><path class="w" d="M1 4h7v7H1z"/><path class="sw" d="M4 3.500v-2h6.500v7H9"/></svg></button>
      <button aria-label="X-ray active"><svg viewBox="0 0 12 12"><path class="sw" d="M1.500 1.500h9v9h-9zM3 3l5 5M8 5v3H5"/></svg></button>
      <i class="vs"></i>
      <button aria-label="Exposure"><svg viewBox="0 0 12 12"><circle class="sw2" cx="6" cy="6" r="3.500" stroke-dasharray="2.500 1"/></svg></button>
      <input type="text" value="0.00" aria-label="Exposure value">
      <button aria-label="Gamma"><svg viewBox="0 0 12 12"><path class="w" d="M6 2a4 4 0 0 1 0 8z"/><path class="sw" d="M6 2.500L4 4v4l2 1.500"/></svg></button>
      <input type="text" value="1.00" aria-label="Gamma value">
      <button class="on" aria-label="Color management"><svg viewBox="0 0 12 12"><circle class="st2" cx="6" cy="6" r="4"/><path class="st" d="M3 5h6M3 7h6"/></svg></button>
      <span class="combo aces"><select aria-label="View transform"><option>ACES 1.0 SDR-video (sRGB)</option></select><svg><use href="#down"/></svg></span>
    </div>
    <div class="stage">
      <svg class="scene" viewBox="197 121 710 503" preserveAspectRatio="xMidYMid slice" role="img" aria-label="3D view of polySurface20">
        <defs>
          <linearGradient id="g1" x1=".1" y1="1" x2=".8" y2="0"><stop offset="0" stop-color="#000"/><stop offset=".4" stop-color="#161616"/><stop offset=".65" stop-color="#363636"/><stop offset=".95" stop-color="#3e3e3e"/><stop offset="1" stop-color="#111"/></linearGradient>
          <linearGradient id="g2" x1="0" y1=".7" x2="1" y2=".3"><stop offset="0" stop-color="#050505"/><stop offset=".3" stop-color="#303030"/><stop offset=".7" stop-color="#424242"/><stop offset=".9" stop-color="#1c1c1c"/><stop offset="1" stop-color="#050505"/></linearGradient>
          <linearGradient id="g3" x1="0" y1=".4" x2="1" y2=".6"><stop offset="0" stop-color="#151515"/><stop offset=".2" stop-color="#383838"/><stop offset=".65" stop-color="#424242"/><stop offset=".8" stop-color="#0a0a0a"/><stop offset="1" stop-color="#000"/></linearGradient>
          <linearGradient id="g4"><stop offset="0" stop-color="#0c0c0c"/><stop offset=".5" stop-color="#444"/><stop offset="1" stop-color="#2c2c2c"/></linearGradient>
          <clipPath id="c1"><ellipse cx="459.300" cy="320" rx="21.800" ry="17"/></clipPath>
          <clipPath id="c2"><ellipse cx="718.300" cy="289.300" rx="21.500" ry="16" transform="rotate(8 718 289)"/></clipPath>
        </defs>
        <path class="grid" d="M197 194L420 121M197 282L645 121M197 395L907 126M197 539L907 231M400 624L907 372M765 624L907 548M197 375L268 624M381 121L693 624M507 121L907 624M634 121L907 402M762 121L907 248M888 121L907 136"/>
        <path class="grid main" d="M254 121L479 624"/>
        <g transform="translate(290 290) scale(.33333)">
          <path class="side" d="M85 510L140 550 208 570 298 582 368 557 380 590 308 613 232 613 165 595 110 552z"/>
          <path class="face" d="M115 247L170 227 213 207 370 145 394 155 455 203 500 265 520 320 524 370 512 422 515 462 298 582 208 570 140 550 85 510 50 455 41 395 52 335 80 285z"/>
        </g>
        <path class="side" d="M389 484L413 476 542 420 700 350 805 302 829 268 829 283 823 291 813 305 798 315 732 345 567 420 417 487z"/>
        <path class="face" d="M697 228L727 215 754 206 773 207 794 214 815 230 827 247 832 260 830 270 826 279 772 306 735 275 713 254z"/>
        <path class="band" d="M373 480L462 442 700 338 772 306 826 278 823 288 805 302 700 350 542 420 413 476 389 484z"/>
        <path class="edge" d="M375 481L462 444 772 308 827 280M379 482L462 446.500 700 342 824 284M383 483L462 449 700 345 815 293M387 484L462 452.500 700 347.500 810 298"/>
        <path class="edge" d="M417 487L567 420 732 345 798 315 813 305 823 291 829 283 831 265M798 315L804 302M813 305L820 289"/>
        <path class="top" d="M400 315.700L693.500 204.500 692.300 215 697.300 227.700 701.700 238.300 713.300 254.300 733.300 273.300 756.700 286 776.700 293.300 460.700 430.700 464 413 463.300 391 454.700 359.300 437.700 339.300 416.700 322.300z"/>
        <path class="side ed" d="M460.700 430.700L776.700 293.300 771.700 307.700 461.700 444z"/>
        <g transform="translate(290 290) scale(.33333)">
          <path class="side ed" d="M330 77L380 97 443 148 494 208 508 260 520 305 500 265 455 203 394 155 370 145 340 118z"/>
          <path class="edge" d="M380 97L392 153M443 148L455 200M494 208L503 260M512 422L524 370 520 305M250 570L298 582 368 557 380 590 308 613 232 613 165 595 110 552 85 510M140 550L165 595M208 570L232 613M298 582L308 613"/>
          <path class="edge" d="M283 357L261 192M283 357L316 172M283 357L394 155M283 357L455 203M283 357L500 267M283 357L520 342M283 357L512 413M283 357L465 472M283 357L405 500M283 357L302 545M283 357L240 568M283 357L172 553M283 357L100 518M283 357L50 453M283 357L44 375M283 357L75 305M283 357L112 252M283 357L168 230M283 357L213 207"/>
          <path class="edge" d="M115 247L170 227 213 207 370 145M115 247L80 285 52 335 41 395 50 455 85 510 140 550 208 570 250 570M170 227L372 149M250 570L512 455"/>
          <ellipse class="hub" cx="283" cy="358" rx="40" ry="33"/>
          <path class="edge" d="M250 374L316 340M252 342L314 374M283 325V392M262 329L306 387M305 330L262 388M243 358H323"/>
          <path d="M244 358C248 334 270 324 297 325" fill="none" stroke="#111" stroke-width="4" stroke-dasharray="7 3"/>
          <ellipse cx="281" cy="365" rx="10" ry="13" fill="#3fe596"/>
          <path class="edge" d="M380 97L445 112M573 66L625 70M494 208L578 176"/>
          <path class="grid inner" d="M213 207L368 557 M172 553L510 407"/>
        </g>
        <ellipse cx="459.300" cy="320" rx="21.800" ry="17" fill="url(#g4)"/>
        <path clip-path="url(#c1)" class="edge" d="M442 300l2 40M447 300l2 40M452 300l2 40M457 300l3 40M463 300l3 40M468 300l3 40M473 300l3 40M478 300l2 40"/>
        <ellipse class="edge" cx="459.300" cy="320" rx="21.800" ry="17"/>
        <ellipse cx="718.300" cy="289.300" rx="21.500" ry="16" fill="url(#g4)" transform="rotate(8 718 289)"/>
        <path clip-path="url(#c2)" class="edge" d="M704 270l-6 36M709 270l-6 38M715 270l-7 40M721 270l-7 40M727 270l-7 40M732 270l-7 40M738 270l-7 40M743 275l-7 36"/>
        <ellipse class="edge" cx="718.300" cy="289.300" rx="21.500" ry="16" transform="rotate(8 718 289)"/>
        <g transform="translate(460 200) scale(.33333)">
          <path fill="url(#g1)" class="ed" d="M50 545L60 598 80 608 115 605 160 570 200 500 235 430 258 365 266 310 262 260 235 240 200 245 150 290 110 345 70 440 52 510z"/>
          <path class="floor ed" d="M80 608L75 590 100 508 140 430 180 378 215 357 240 358 258 368 235 430 200 500 160 570 115 605z"/>
          <path class="edge" d="M235 240L240 355M208 245L218 355M180 260L188 372M148 292L158 403M122 330L132 442M100 365L112 482M82 410L92 530M65 460L78 575M55 510L66 600M262 260L258 365"/>
          <path fill="url(#g2)" class="ed" d="M292 405L300 350 325 285 355 230 385 187 420 160 445 158 470 178 482 225 480 275 466 325 445 375 415 430 375 480 340 503 310 490 295 460z"/>
          <path class="floor ed" d="M295 465L310 415 335 360 375 300 415 277 435 278 460 305 466 325 445 375 415 430 375 480 340 503 310 490z"/>
          <path class="edge" d="M420 162L412 277M390 182L385 290M365 220L358 320M345 250L340 350M325 290L320 385M308 335L306 420M297 375L298 455M445 160L436 278M458 168L447 290M470 180L458 300M480 215L464 315"/>
          <path fill="url(#g3)" class="ed" d="M512 320L515 250 535 185 565 130 600 90 635 82 665 100 682 145 686 190 680 240 660 300 635 355 605 390 570 407 545 402 522 375z"/>
          <path class="floor ed" d="M512 320L530 270 560 225 600 203 625 205 645 225 658 265 660 300 635 355 605 390 570 407 545 402 522 375z"/>
          <path class="edge" d="M635 82L605 203M612 85L580 212M590 100L560 228M565 130L540 255M545 165L525 280M528 205L515 305M655 92L628 208M670 115L645 225M680 145L655 250M685 185L658 270M684 220L660 290"/>
          <path class="grid inner" d="M140 370L210 485M540 265L620 365"/>
          <path class="edge" d="M262 361L297 350M480 277L514 263M686 192L720 181M660 301L720 300"/>
          <path class="grid inner" d="M290 608l12 24M678 434l14 24"/>
        </g>
        <g transform="translate(660 125) scale(.33333)">
          <path class="edge" d="M110 306L202 272 282 243 340 252 405 273 466 316 502 367 515 403 512 430 498 460 485 510M112 303L240 257"/>
          <path class="edge" d="M308 382L202 272M308 382L242 260M308 382L282 243M308 382L340 252M308 382L405 275M308 382L466 316M308 382L502 367M308 382L510 416M308 382L497 460M308 382L450 478M308 382L387 510M308 382L335 493M308 382L290 482M308 382L243 455M308 382L200 425M308 382L160 388M308 382L127 344M308 382L112 306M308 382L175 284M160 388L85 417M220 443L224 460"/>
          <ellipse class="hub" cx="309" cy="382" rx="41" ry="29"/>
          <path d="M272 372C275 355 330 348 348 385" fill="none" stroke="#222" stroke-width="10" stroke-dasharray="6 3"/>
          <path class="edge" d="M275 372C285 360 330 363 346 390M275 385L345 393M290 404L310 365M320 411L316 368M270 375L330 408"/>
          <path d="M280 380L315 392 320 408 300 405z" fill="#3fe596"/>
          <path class="grid inner" d="M202 272L420 500M335 490L512 415M220 272L440 525"/>
          <path fill="#9a9a9a" d="M575 55L580 100 615 158 610 118z"/><path fill="#aaa" d="M610 118L690 85 685 128 615 158z"/><path fill="#b8b8b8" d="M575 52L648 25 690 83 610 118z"/>
          <path fill="none" stroke="#666" stroke-width="3" d="M576 54L610 118 690 84M610 118L615 157"/>
          <path fill="none" stroke="#888" stroke-width="2" d="M622 133l55-23v7l-55 23zM583 78l18 36 4 24-18-32z"/>
          <text class="cubetext" transform="translate(624 70) rotate(60)">TOP</text>
        </g>
        <g transform="translate(460 200) scale(.33333)">
          <circle cx="388" cy="372" r="16" fill="none" stroke="#4f8db3" stroke-width="4"/>
          <path stroke="#00c800" stroke-width="3" d="M390 348L396 265"/><path fill="#00f000" d="M397 228L388 265 406 265z"/>
          <path stroke="#0000c8" stroke-width="3" d="M357 385L242 434"/><path fill="#0000f0" d="M202 448L238 425 243 443z"/>
          <path stroke="#eeea80" stroke-width="3" d="M407 398L478 490"/><path fill="#ffff78" d="M496 524L467 497 490 485z"/>
          <path fill="#d07068" stroke="#f04040" stroke-width="2" d="M262 333L290 320V342L262 350z"/>
          <path fill="#7078d8" stroke="#4848f0" stroke-width="2" d="M452 358L473 380V403L452 387z"/>
          <path fill="#2ee060" d="M318 510L346 495 358 517 328 528z"/>
        </g>
        <path fill="none" stroke="#20c020" d="M213.500 609v-6M211.500 598l2 3 2-3M213.500 601v2"/>
        <path fill="none" stroke="#1818e0" d="M213 608.500l-7 2M203.500 607.500h3l-3 3h3"/>
        <path fill="none" stroke="#e01818" d="M213.500 609l3 3M216 610l3 3.500M219 610l-3 3.500"/>
      </svg>
      <span class="cam">persp</span>
    </div>
  </section>

  <aside class="attr">
    <div class="tabs"><button>Modeling Toolkit</button><button class="sel">Attribute Editor</button></div>
    <div class="menus"><button>List</button><button>Selected</button><button>Focus</button><button>Attributes</button><button>Display</button><button>Show</button><button>Help</button><button class="pin" aria-label="Pin"><svg viewBox="0 0 8 8"><path class="w" d="M5 0l3 3-1 .5-1 2-1 1-1.500-1.500L1 8 0 7.500 3 4.500 1.500 3l1-1 2-1z"/></svg></button></div>
    <div class="nodetabs"><button>polySurface20</button><button class="sel">polySurfaceShape25</button><button>initialShadingGroup</button><button class="last">standardS</button><svg class="arr" viewBox="0 0 5 8"><path fill="#777" d="M5 0v8L0 4z"/></svg><svg class="arr"><use href="#right"/></svg></div>
    <div class="node">
      <label for="meshname">mesh:</label><input id="meshname" type="text" value="polySurfaceShape25">
      <div class="io"><button aria-label="Input connection"><svg viewBox="0 0 12 12"><path class="sw" d="M3 4V2h8v8H3V8"/><path class="w" d="M1 4l4 2-4 2z"/></svg></button><button aria-label="Output connection"><svg viewBox="0 0 12 12"><path class="sw" d="M9 4V2H1v8h8V8"/><path class="w" d="M8 4l4 2-4 2z"/></svg></button></div>
      <div class="acts"><button class="full">Focus</button><button class="full" disabled>Presets</button><button>Show</button><button>Hide</button></div>
    </div>
    <div class="sections">
      <button><svg><use href="#right"/></svg>Tessellation Attributes</button>
      <button><svg><use href="#right"/></svg>Mesh Component Display</button>
      <button><svg><use href="#right"/></svg>Mesh Controls</button>
      <button><svg><use href="#right"/></svg>Tangent Space</button>
      <button><svg><use href="#right"/></svg>Smooth Mesh</button>
      <button><svg><use href="#right"/></svg>Displacement Map</button>
      <button><svg><use href="#right"/></svg>Render Stats</button>
      <button><svg><use href="#right"/></svg>Object Display</button>
      <button><svg><use href="#right"/></svg>Component Tags</button>
      <button><svg><use href="#right"/></svg>Arnold</button>
      <button><svg><use href="#right"/></svg>Node Behavior</button>
      <button><svg><use href="#right"/></svg>UUID</button>
      <button><svg><use href="#right"/></svg>Extra Attributes</button>
    </div>
    <i class="dots"></i>
    <label class="notes" for="notes">Notes:&nbsp; polySurfaceShape25</label>
    <textarea id="notes"></textarea>
    <div class="foot"><button>Select</button><button>Load Attributes</button><button>Copy Tab</button></div>
  </aside>
</main>
<footer></footer>
</body>
</html>
```
FILE: styles.css
```css
* { box-sizing: border-box; }
body {
  margin: 0;
  height: 100vh;
  display: flex;
  flex-direction: column;
  overflow: hidden;
  background: #444;
  color: #c8c8c8;
  font: 500 7px/10px "Open Sans", "Noto Sans", sans-serif;
}
button, input, select, textarea {
  font: inherit;
  color: inherit;
  border: 0;
  margin: 0;
  padding: 0;
  background: none;
  border-radius: 0;
  outline: 0;
  min-width: 0;
  white-space: nowrap;
}
svg { display: block; flex: none; }
.defs { position: absolute; width: 0; height: 0; }

/* icon paints */
.w { fill: #c6c6c6; }
.o { fill: #e1914c; }
.t { fill: #4db4c0; }
.k { fill: #3a3a3a; }
.sw, .sw2, .st, .st2, .so, .so2, .sd, .sg { fill: none; }
.sw { stroke: #bdbdbd; }
.sw2 { stroke: #c6c6c6; stroke-width: 1.5; }
.st { stroke: #4db4c0; }
.st2 { stroke: #4db4c0; stroke-width: 1.5; }
.so { stroke: #e1914c; }
.so2 { stroke: #e1914c; stroke-width: 2; }
.sd { stroke: #444; stroke-width: .8; }
.sg { stroke: #22cc22; stroke-width: 1.3; }
.svgtext { font: 700 6px "Open Sans", sans-serif; fill: #444; text-anchor: middle; }

/* title bar */
.titlebar {
  flex: none;
  height: 14px;
  display: flex;
  align-items: center;
  background: #fff;
  color: #000;
  padding-left: 2px;
}
.logo { width: 9px; height: 10px; }
.titlebar h1 { margin: 0 0 0 3px; font: 400 7px/12px "Open Sans", "Noto Sans", sans-serif; white-space: nowrap; }
.winbtns { margin-left: auto; display: flex; }
.winbtns button { width: 28px; height: 12px; display: grid; place-items: center; }
.winbtns svg { width: 8px; height: 8px; fill: none; stroke: #222; stroke-width: .8; }

/* menus */
.menubar { flex: none; height: 17px; display: flex; align-items: center; border-top: 1px solid #666; padding-left: 6px; }
.menus { display: flex; gap: 10px; }
.menubar .menus { gap: 9px; }
.workspace { margin-left: auto; display: flex; align-items: center; gap: 3px; color: #aaa; }
.workspace .ib { width: 14px; margin-right: 1px; }
.combo { position: relative; display: flex; align-items: center; background: #5b5b5b; height: 12px; }
.combo select { appearance: none; width: 100%; height: 12px; padding-left: 2px; color: #c4c4c4; line-height: 12px; }
.combo svg { position: absolute; right: 3px; width: 6px; height: 4px; }
.combo::after { content: ""; position: absolute; right: 12px; top: 0; bottom: 0; border-left: 1px solid #444; }
.wide { width: 119px; }
.mode { width: 62px; margin-left: 2px; }

/* status line */
.status { flex: none; height: 18px; display: flex; align-items: center; border-bottom: 1px solid #383838; }
.grip { flex: none; align-self: stretch; width: 6px; margin: 2px 0; background: radial-gradient(circle, #666 0 .6px, transparent 1px) 0 0 / 3px 3px; }
.sep { flex: none; width: 14px; height: 10px; background: linear-gradient(#888, #888) center / 1px 100% no-repeat; }
.fold { display: flex; align-items: center; }
.fold::after { content: ""; margin-left: 8px; border: 2px solid transparent; border-left-color: #888; border-right: 0; }
.grp { flex: none; display: flex; justify-content: space-between; }
.g3 { width: 44px; }
.g5 { width: 71px; }
.g6 { width: 87px; }
.g8 { width: 115px; }
.end { margin-left: auto; margin-right: 2px; width: 73px; }
.ib { flex: none; width: 14px; height: 14px; display: grid; place-items: center; }
.ib svg { width: 12px; height: 12px; }
.g6 .ib svg { width: 14px; height: 14px; }
.wideib { width: 21px; }
.on { background: #5285a6; }
.caret { flex: none; width: 11px; display: grid; place-items: center; }
.caret svg { width: 4px; height: 3px; }
.field { flex: none; height: 13px; border: 1px solid #3a3a3a; background: #444; text-align: left; padding-left: 2px; }
.live { width: 61px; }
.sym { width: 63px; }
.axis { flex: none; width: 32px; display: grid; grid-template-columns: 8px 24px; align-items: center; color: #aaa; }
.axis input, .vbar input { background: #2b2b2b; height: 12px; width: 24px; border-radius: 2px; }
.signin { flex: none; width: 75px; height: 13px; display: flex; align-items: center; gap: 3px; background: #5b5b5b; padding: 0 2px 0 3px; border-radius: 2px; color: #ddd; }
.signin svg { width: 9px; height: 9px; }
.signin .tri { margin-left: auto; width: 6px; height: 4px; }

/* shelf */
.shelf { flex: none; display: flex; height: 43px; padding-top: 2px; }
.shelfctl { flex: none; width: 12px; margin: 0 2px 0 3px; height: 39px; background: #303030; display: flex; flex-direction: column; justify-content: space-between; padding: 4px 2px; }
.shelfctl svg { width: 8px; height: 8px; }
.shelfbody { flex: 1; min-width: 0; }
.shelftabs { display: flex; gap: 1px; height: 12px; background: #363636; padding-left: 1px; margin-right: 2px; }
.shelftabs button { padding: 0 7px; line-height: 14px; height: 12px; background: #3b3b3b; color: #8d8d8d; border-radius: 2px 2px 0 0; overflow: hidden; }
.shelftabs button.sel { padding: 0 5px; }
.shelftabs .sel, .tabs .sel, .nodetabs .sel { background: #444; color: #eee; font-weight: 600; }
.shelfrow { display: flex; align-items: center; height: 25px; padding-left: 3px; }
.shelfrow button { flex: none; width: 22px; height: 24px; display: grid; place-items: center; }
.shelfrow svg { width: 16px; height: 16px; }
.shelfrow .big { width: 22px; height: 22px; }
.bar { flex: none; width: 2px; height: 22px; margin: 0 3px 0 2px; background: #7b7b7b; }
.spin { margin-left: auto; margin-right: 5px; background: #333; }
.shelfrow .spin svg { width: 8px; height: 20px; }

/* main columns */
main { flex: 1; min-height: 0; display: grid; grid-template-columns: 27px 164px minmax(0, 1fr) 290px; column-gap: 3px; padding-top: 2px; background: linear-gradient(#383838, #383838) 0 0 / 100% 12px no-repeat #444; }
footer { flex: none; height: 4px; background: #3b3b3b; border-top: 1px solid #333; }

.toolbox { display: flex; flex-direction: column; align-items: center; background: #444; border-right: 1px solid #3a3a3a; }
.hgrip { flex: none; width: 24px; height: 6px; background: radial-gradient(circle, #666 0 .6px, transparent 1px) 0 0 / 3px 3px; }
.toolbox button { flex: none; width: 23px; height: 23px; display: grid; place-items: center; }
.toolbox button svg { width: 22px; height: 22px; }
.toolbox .cut { margin-top: 23px; }
.toolbox .cut svg { width: 18px; height: 18px; }
.toolbox hr { flex: none; width: 23px; height: 2px; margin: 3px 0 2px; border: 0; background: #8a8a8a; }
.maya { width: 20px; height: 22px; margin: auto 0 3px; }

.tabs { display: flex; gap: 2px; height: 12px; background: #383838; }
.tabs button { padding: 0 6px; line-height: 12px; background: #3b3b3b; color: #8d8d8d; border-radius: 2px 2px 0 0; }
.outliner { display: flex; flex-direction: column; min-height: 0; border-right: 1px solid #3a3a3a; }
.outliner .menus { height: 14px; padding-left: 6px; gap: 9px; align-items: flex-start; line-height: 9px; }
.search { display: flex; align-items: center; height: 14px; padding: 0 1px 1px 3px; }
.search > svg { width: 10px; height: 10px; margin-right: 5px; }
.sbox { flex: 1; display: flex; align-items: center; height: 12px; background: #2b2b2b; padding: 0 3px 0 2px; }
.sbox input { flex: 1; }
.sbox input::placeholder { color: #9a9a9a; opacity: 1; }
.sbox .tri { width: 6px; height: 4px; }
.tree { flex: 1; min-height: 0; display: flex; background: #373737; margin-left: 1px; }
.tree ul { flex: 1; list-style: none; margin: 0; padding: 0; display: grid; grid-auto-rows: 1fr; align-self: flex-start; min-height: 125px; }
.tree li { display: flex; align-items: center; padding-left: 21px; gap: 1px; }
.tree li svg { width: 12px; height: 11px; }
.dim { color: #6c6c6c; }
.tree .picked { background: #5285a6; color: #fff; font-weight: 600; }
.vscroll { width: 8px; display: flex; flex-direction: column; align-items: center; gap: 3px; padding: 2px 1px; background: #303030; }
.vscroll svg { width: 6px; height: 4px; }
.vscroll i { flex: 1; width: 6px; background: #5d5d5d; border-radius: 2px; }
.hscroll { height: 8px; display: flex; align-items: center; gap: 3px; margin: 0 9px 0 3px; }
.hscroll svg { width: 4px; height: 6px; }
.hscroll i { flex: 1; height: 6px; background: #5d5d5d; border-radius: 3px; }
.dots { flex: none; align-self: center; height: 2px; width: 54px; background: repeating-linear-gradient(90deg, #666 0 1px, transparent 1px 2px) center / 100% 1px no-repeat; }
.outliner .dots { height: 6px; }

/* viewport */
.viewport { display: flex; flex-direction: column; min-width: 0; min-height: 0; margin-left: -1px; border: 1px solid #7d7d7d; background: #444; }
.viewport .menus { height: 11px; padding-left: 6px; gap: 9px; }
.vbar { flex: none; height: 14px; display: flex; align-items: center; }
.vbar button { flex: none; width: 12px; height: 12px; display: grid; place-items: center; }
.vbar button svg { width: 10px; height: 10px; }
.vbar .bright { background: #2da6cf; }
.vbar .off { background: #414141; }
.vs { flex: none; width: 6px; height: 9px; background: linear-gradient(#888, #888) center / 1px 100% no-repeat; }
.vbar input { margin: 0 1px; padding-left: 4px; height: 11px; flex: none; }
.vbar button + input { margin-left: 2px; }
.aces { width: 124px; margin-left: 1px; height: 11px; }
.aces select { height: 11px; }
.stage { position: relative; flex: 1; min-height: 0; background: #5d5d5d; }
.scene { width: 100%; height: 100%; }
.cam { position: absolute; left: 0; right: 8px; bottom: 4px; text-align: center; color: #fff; font-weight: 700; font-size: 6px; }

.grid { fill: none; stroke: #484848; stroke-width: 1; }
.main { stroke: #3c3c3c; }
.inner { stroke: #4a4a4a; stroke-width: 3; }
.face, .top { fill: #8c8c8c; }
.band { fill: #7c8a82; stroke: #4ce29b; stroke-width: .8; }
.side { fill: #434343; }
.floor { fill: #5d5d5d; }
.edge, .hub { fill: none; }
.edge, .ed, .top, .hub { stroke: #4ce29b; stroke-width: .8; vector-effect: non-scaling-stroke; }
.cubetext { font: 700 17px "Open Sans", sans-serif; fill: #606060; text-anchor: middle; }

/* attribute editor */
.attr { display: flex; flex-direction: column; min-height: 0; border-left: 1px solid #3a3a3a; padding-left: 1px; }
.attr .menus { height: 16px; align-items: flex-start; padding: 2px 0 0 5px; gap: 9px; }
.pin { margin-left: auto; margin-right: 7px; }
.pin svg { width: 8px; height: 8px; }
.nodetabs { display: flex; align-items: center; gap: 2px; height: 12px; margin: 9px 6px 0 3px; }
.nodetabs button { flex: none; height: 12px; padding: 0 6px; line-height: 13px; background: #3b3b3b; color: #8d8d8d; border-radius: 2px 2px 0 0; }
.nodetabs button.sel { padding: 0 4px; }
.nodetabs .last { flex: 1; padding: 0 0 0 5px; text-align: left; }
.arr { width: 4px; height: 6px; margin-left: 3px; }
.node { display: flex; align-items: center; height: 41px; margin: 5px 0 0; }
.node label { flex: none; width: 93px; text-align: right; margin-right: 5px; color: #aaa; }
.node > input { flex: 1; height: 12px; background: #2b2b2b; padding-left: 3px; border-radius: 2px; color: #ddd; }
.io { display: flex; flex-direction: column; gap: 2px; margin: 0 6px 0 8px; }
.io button { width: 12px; height: 12px; }
.acts { flex: none; display: grid; grid-template-columns: 21px 21px; grid-auto-rows: 13px; gap: 1px 2px; margin-right: 24px; }
.acts .full { grid-column: 1 / 3; }
.acts button, .foot button { background: #5d5d5d; color: #ddd; font-weight: 600; border-radius: 1px; }
.acts button:disabled { background: #505050; color: #7a7a7a; }
.sections { flex: none; display: flex; flex-direction: column; justify-content: space-between; min-height: 178px; margin: 10px 8px 0 6px; }
.sections button { height: 13px; display: flex; align-items: center; gap: 10px; padding-left: 6px; background: #5d5d5d; color: #bdbdbd; font-weight: 600; border-radius: 1px; }
.sections svg { width: 4px; height: 7px; }
.attr .dots { width: 95px; margin-top: auto; }
.notes { padding-left: 7px; line-height: 11px; font-weight: 600; }
.attr textarea { flex: none; height: 63px; margin: 0 3px 0 2px; background: #2b2b2b; resize: none; }
.foot { display: grid; grid-template-columns: 93fr 97fr 94fr; gap: 1px; margin: 3px 2px 1px 0; }
.foot button { height: 17px; }
```
